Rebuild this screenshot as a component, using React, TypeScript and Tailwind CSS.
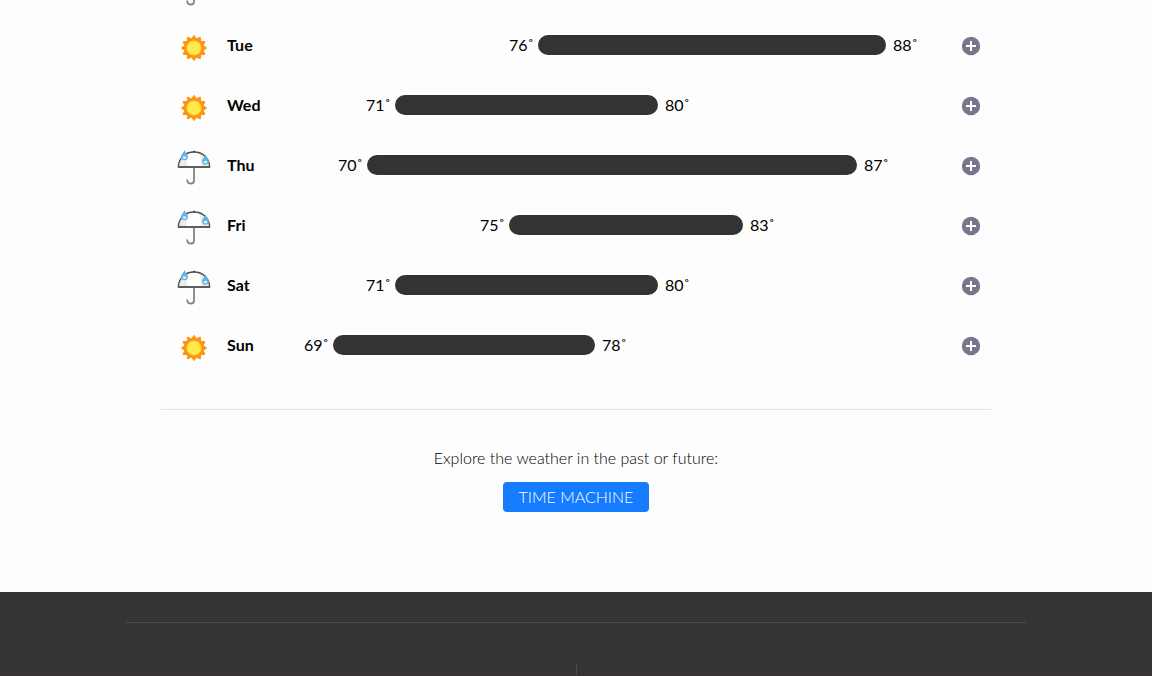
type Weather = "sun" | "rain";
type Day = { name: string; icon: Weather; low: number; high: number; start: number; end: number };

const TRACK = 553;

const days: Day[] = [
  { name: "Tue", icon: "sun", low: 76, high: 88, start: 205, end: 553 },
  { name: "Wed", icon: "sun", low: 71, high: 80, start: 62, end: 325 },
  { name: "Thu", icon: "rain", low: 70, high: 87, start: 34, end: 524 },
  { name: "Fri", icon: "rain", low: 75, high: 83, start: 176, end: 410 },
  { name: "Sat", icon: "rain", low: 71, high: 80, start: 62, end: 325 },
  { name: "Sun", icon: "sun", low: 69, high: 78, start: 0, end: 262 },
];

const percent = (n: number) => `${(n / TRACK) * 100}%`;

const sunPoints = Array.from({ length: 24 }, (_, i) => {
  const r = i % 2 === 0 ? 12.6 : 9.4;
  const a = (i * Math.PI) / 12;
  return `${(17 + r * Math.sin(a)).toFixed(2)},${(19 - r * Math.cos(a)).toFixed(2)}`;
}).join(" ");

function SunIcon() {
  return (
    <svg viewBox="0 0 34 36" className="h-9 w-[34px] shrink-0" aria-hidden="true">
      <polygon points={sunPoints} fill="#ff930f" stroke="#ff930f" strokeWidth="1" strokeLinejoin="round" />
      <circle cx="17" cy="19" r="7.3" fill="#ffe94d" stroke="#ffc62a" strokeWidth="0.6" />
    </svg>
  );
}

function Drop({ x, y }: { x: number; y: number }) {
  return (
    <g transform={`translate(${x} ${y})`}>
      <path d="M0-5C.6-2.6 3.400-.6 3.400 1.800a3.400 3.400 0 0 1-6.800 0C-3.400-.6-.6-2.600 0-5Z" fill="#5fb2e6" />
      <ellipse cx="0" cy="2.600" rx="1.900" ry="1.400" fill="#d8f1fd" />
    </g>
  );
}

function UmbrellaIcon() {
  return (
    <svg viewBox="0 0 34 36" className="h-9 w-[34px] shrink-0" aria-hidden="true">
      <path d="M17 18v13.500a3 3 0 0 1-3 3c-2.200 0-3.700-1.100-3.700-3.300" fill="none" stroke="#858585" strokeWidth="1.800" strokeLinecap="round" />
      <path d="M1.300 18.500C1.700 9.500 8 3 17 3s15.300 6.500 15.700 15.500Z" fill="#fff" />
      <path d="M1.700 18C2.300 10.500 7 5 13 3.600C10 7.500 9.500 13 10 18Z M32.300 18C31.700 10.500 27 5 21 3.600C24 7.500 24.500 13 24 18Z" fill="#ececec" />
      <path d="M1.300 18C1.700 9.500 8 3 17 3s15.300 6.500 15.700 15Z" fill="none" stroke="#505050" strokeWidth="1.300" strokeLinejoin="round" />
      <path d="M1 18h32" stroke="#555" strokeWidth="1.500" />
      <path d="M17 1.800v1.500" stroke="#333" strokeWidth="1.500" />
      <Drop x={7.5} y={6} />
      <Drop x={28.5} y={10.5} />
    </svg>
  );
}

function WeatherIcon({ kind }: { kind: Weather }) {
  return kind === "sun" ? <SunIcon /> : <UmbrellaIcon />;
}

function DayRow({ day }: { day: Day }) {
  return (
    <li className="flex h-[60px] items-center pr-2.5 pl-4">
      <div className="pt-1">
        <WeatherIcon kind={day.icon} />
      </div>
      <span className="ml-4 w-[106px] shrink-0 font-bold">{day.name}</span>
      <div className="flex min-w-0 flex-1 items-center">
        <span className="shrink-0" style={{ width: percent(day.start) }} />
        <span className="-ml-8 w-8 shrink-0 pr-1 text-right">{day.low}˚</span>
        <span className="h-5 shrink-0 rounded-full bg-[#333]" style={{ width: percent(day.end - day.start) }} />
        <span className="ml-[7px] w-0 whitespace-nowrap">{day.high}˚</span>
      </div>
      <button type="button" aria-label={`Show details for ${day.name}`} className="mt-0.5 ml-[75px] shrink-0 cursor-pointer">
        <svg viewBox="0 0 20 20" className="size-5" aria-hidden="true">
          <circle cx="10" cy="10" r="9.200" fill="#78758c" />
          <path d="M10 5v10M5 10h10" stroke="#fff" strokeWidth="2" />
        </svg>
      </button>
    </li>
  );
}

export default function App() {
  return (
    <div className="flex min-h-screen flex-col bg-[#fdfdfd] font-['Lato',sans-serif] text-base text-black">
      <main className="mx-auto w-full max-w-[830px] pb-20">
        <div className="flex h-[15px] items-end overflow-hidden pb-[9px] pl-4">
          <UmbrellaIcon />
        </div>
        <ul>
          {days.map((day) => (
            <DayRow key={day.name} day={day} />
          ))}
        </ul>
        <section className="mt-[34px] flex flex-col items-center border-t border-[#e3e3e3] pt-9">
          <p className="leading-6 font-light">Explore the weather in the past or future:</p>
          <button type="button" className="mt-3 h-[30px] cursor-pointer rounded-sm bg-[#157cff] px-4 font-light text-white">
            TIME MACHINE
          </button>
        </section>
      </main>
      <footer className="flex flex-1 flex-col border-b border-[#382f33] bg-[#343434] pt-[30px]">
        <div className="mx-auto flex w-full max-w-[900px] flex-1 border-t border-[#4a4a4a] pt-10">
          <div className="flex-1" />
          <div className="flex-1 border-l border-[#4a4a4a]" />
        </div>
      </footer>
    </div>
  );
}
